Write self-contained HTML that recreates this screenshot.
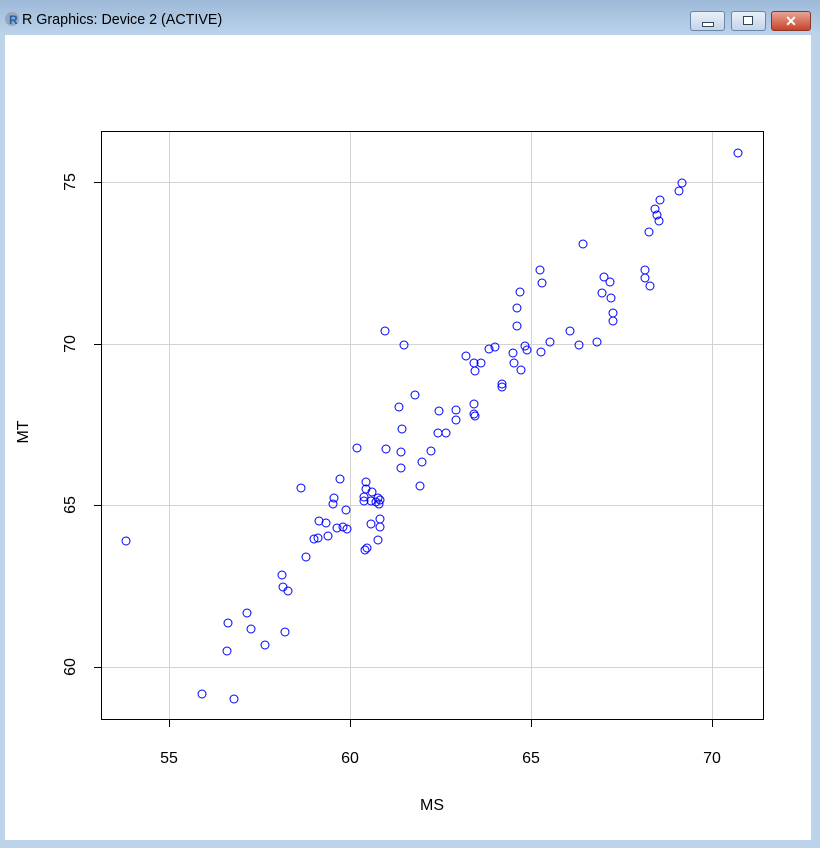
<!DOCTYPE html>
<html><head><style>
body{margin:0;width:820px;height:848px;overflow:hidden;background:#bcd3ea;font-family:"Liberation Sans",sans-serif}
.tb{position:absolute;left:0;top:0;width:820px;height:35px;background:linear-gradient(#9db9d8,#bcd3ea)}
.title{position:absolute;left:22px;top:12px;font-size:14.3px;color:#000}
.btn{position:absolute;top:11px;height:18px;border:1px solid #6a86a8;border-radius:3px;background:linear-gradient(#e9f0f8,#c4d4e8)}
.cl{background:linear-gradient(#e9a595,#c8432b);border-color:#8a3525}
.win{position:absolute;left:5px;top:35px;width:806px;height:805px;background:#fff}
</style></head><body>
<div class="tb"></div>
<svg style="position:absolute;left:4px;top:11px" width="16" height="16"><circle cx="8" cy="8" r="7" fill="#9aa7b8"/><text x="5" y="13" font-size="12" font-weight="bold" fill="#2060b0" font-family="Liberation Sans">R</text></svg>
<div class="title">R Graphics: Device 2 (ACTIVE)</div>
<div class="btn" style="left:690px;width:33px"><div style="position:absolute;left:11px;top:10px;width:10px;height:3px;background:#fff;border:1px solid #345"></div></div>
<div class="btn" style="left:731px;width:33px"><div style="position:absolute;left:11px;top:4px;width:8px;height:7px;border:1px solid #345;background:#fff"></div></div>
<div class="btn cl" style="left:771px;width:38px;color:#fff;font-weight:bold;font-size:14px;text-align:center;line-height:18px">✕</div>
<div class="win"></div>
<svg style="position:absolute;left:0;top:0" width="820" height="848" font-family="Liberation Sans" font-size="16">
<g stroke="#d3d3d3" stroke-width="1">
<line x1="169.5" y1="131" x2="169.5" y2="719"/><line x1="350.5" y1="131" x2="350.5" y2="719"/><line x1="531.5" y1="131" x2="531.5" y2="719"/><line x1="712.5" y1="131" x2="712.5" y2="719"/>
<line x1="101" y1="182.5" x2="763" y2="182.5"/><line x1="101" y1="344.5" x2="763" y2="344.5"/><line x1="101" y1="505.5" x2="763" y2="505.5"/><line x1="101" y1="667.5" x2="763" y2="667.5"/>
</g>
<rect x="101.5" y="131.5" width="662" height="588" fill="none" stroke="#000"/>
<g stroke="#000">
<line x1="169.5" y1="720" x2="169.5" y2="727"/><line x1="350.5" y1="720" x2="350.5" y2="727"/><line x1="531.5" y1="720" x2="531.5" y2="727"/><line x1="712.5" y1="720" x2="712.5" y2="727"/>
<line x1="94" y1="182.5" x2="101" y2="182.5"/><line x1="94" y1="344.5" x2="101" y2="344.5"/><line x1="94" y1="505.5" x2="101" y2="505.5"/><line x1="94" y1="667.5" x2="101" y2="667.5"/>
</g>
<g text-anchor="middle" fill="#000">
<text x="169" y="763">55</text><text x="350" y="763">60</text><text x="531" y="763">65</text><text x="712" y="763">70</text>
<text transform="translate(75,182) rotate(-90)">75</text><text transform="translate(75,344) rotate(-90)">70</text><text transform="translate(75,505) rotate(-90)">65</text><text transform="translate(75,667) rotate(-90)">60</text>
<text x="432" y="810">MS</text>
<text transform="translate(28,432) rotate(-90)">MT</text>
</g>
<g fill="none" stroke="#0000ff" stroke-width="1">
<circle cx="738" cy="153" r="4"/><circle cx="682" cy="183" r="4"/><circle cx="679" cy="191" r="4"/><circle cx="660" cy="200" r="4"/><circle cx="655" cy="209" r="4"/><circle cx="657" cy="215" r="4"/><circle cx="659" cy="221" r="4"/><circle cx="649" cy="232" r="4"/><circle cx="583" cy="244" r="4"/><circle cx="645" cy="270" r="4"/><circle cx="645" cy="278" r="4"/><circle cx="650" cy="286" r="4"/><circle cx="540" cy="270" r="4"/><circle cx="604" cy="277" r="4"/><circle cx="610" cy="282" r="4"/><circle cx="542" cy="283" r="4"/><circle cx="520" cy="292" r="4"/><circle cx="602" cy="293" r="4"/><circle cx="611" cy="298" r="4"/><circle cx="517" cy="308" r="4"/><circle cx="613" cy="313" r="4"/><circle cx="613" cy="321" r="4"/><circle cx="517" cy="326" r="4"/><circle cx="385" cy="331" r="4"/><circle cx="570" cy="331" r="4"/><circle cx="404" cy="345" r="4"/><circle cx="550" cy="342" r="4"/><circle cx="597" cy="342" r="4"/><circle cx="579" cy="345" r="4"/><circle cx="489" cy="349" r="4"/><circle cx="495" cy="347" r="4"/><circle cx="525" cy="346" r="4"/><circle cx="527" cy="350" r="4"/><circle cx="466" cy="356" r="4"/><circle cx="513" cy="353" r="4"/><circle cx="541" cy="352" r="4"/><circle cx="474" cy="363" r="4"/><circle cx="481" cy="363" r="4"/><circle cx="514" cy="363" r="4"/><circle cx="475" cy="371" r="4"/><circle cx="521" cy="370" r="4"/><circle cx="502" cy="384" r="4"/><circle cx="502" cy="387" r="4"/><circle cx="415" cy="395" r="4"/><circle cx="474" cy="404" r="4"/><circle cx="399" cy="407" r="4"/><circle cx="456" cy="410" r="4"/><circle cx="439" cy="411" r="4"/><circle cx="474" cy="414" r="4"/><circle cx="475" cy="416" r="4"/><circle cx="456" cy="420" r="4"/><circle cx="402" cy="429" r="4"/><circle cx="438" cy="433" r="4"/><circle cx="446" cy="433" r="4"/><circle cx="357" cy="448" r="4"/><circle cx="386" cy="449" r="4"/><circle cx="431" cy="451" r="4"/><circle cx="401" cy="452" r="4"/><circle cx="422" cy="462" r="4"/><circle cx="401" cy="468" r="4"/><circle cx="340" cy="479" r="4"/><circle cx="366" cy="482" r="4"/><circle cx="301" cy="488" r="4"/><circle cx="420" cy="486" r="4"/><circle cx="372" cy="492" r="4"/><circle cx="366" cy="489" r="4"/><circle cx="364" cy="497" r="4"/><circle cx="378" cy="498" r="4"/><circle cx="380" cy="500" r="4"/><circle cx="376" cy="502" r="4"/><circle cx="334" cy="498" r="4"/><circle cx="364" cy="501" r="4"/><circle cx="371" cy="501" r="4"/><circle cx="379" cy="504" r="4"/><circle cx="333" cy="504" r="4"/><circle cx="346" cy="510" r="4"/><circle cx="319" cy="521" r="4"/><circle cx="326" cy="523" r="4"/><circle cx="380" cy="519" r="4"/><circle cx="371" cy="524" r="4"/><circle cx="380" cy="527" r="4"/><circle cx="343" cy="527" r="4"/><circle cx="337" cy="528" r="4"/><circle cx="347" cy="529" r="4"/><circle cx="318" cy="538" r="4"/><circle cx="328" cy="536" r="4"/><circle cx="378" cy="540" r="4"/><circle cx="314" cy="539" r="4"/><circle cx="367" cy="548" r="4"/><circle cx="365" cy="550" r="4"/><circle cx="126" cy="541" r="4"/><circle cx="306" cy="557" r="4"/><circle cx="282" cy="575" r="4"/><circle cx="283" cy="587" r="4"/><circle cx="288" cy="591" r="4"/><circle cx="247" cy="613" r="4"/><circle cx="228" cy="623" r="4"/><circle cx="251" cy="629" r="4"/><circle cx="285" cy="632" r="4"/><circle cx="265" cy="645" r="4"/><circle cx="227" cy="651" r="4"/><circle cx="202" cy="694" r="4"/><circle cx="234" cy="699" r="4"/>
</g>
</svg>
</body></html>
